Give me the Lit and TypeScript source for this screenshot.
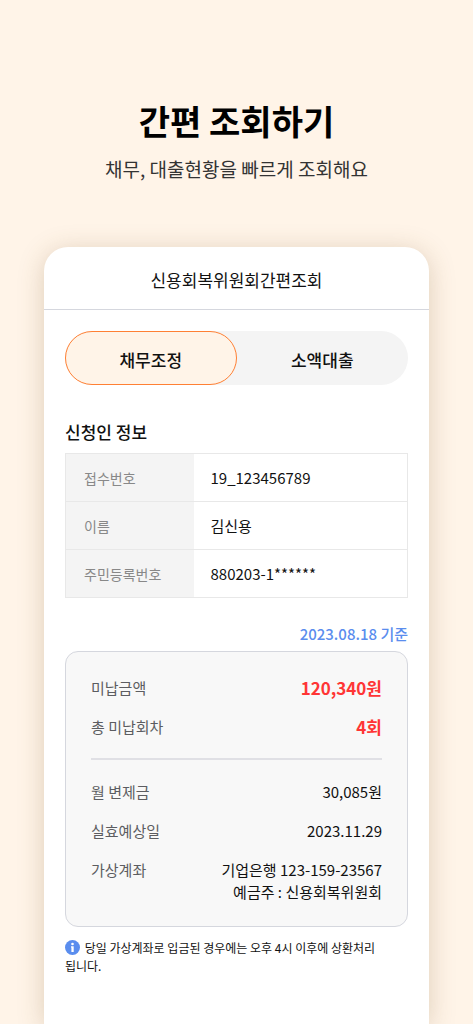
import { LitElement, html, css } from "lit";
import { customElement, state } from "lit/decorators.js";

interface Entry {
  label: string;
  lines: string[];
  alert?: boolean;
}

const TABS = ["채무조정", "소액대출"];

const APPLICANT: [string, string][] = [
  ["접수번호", "19_123456789"],
  ["이름", "김신용"],
  ["주민등록번호", "880203-1******"],
];

const OVERDUE: Entry[] = [
  { label: "미납금액", lines: ["120,340원"], alert: true },
  { label: "총 미납회차", lines: ["4회"], alert: true },
];

const REPAYMENT: Entry[] = [
  { label: "월 변제금", lines: ["30,085원"] },
  { label: "실효예상일", lines: ["2023.11.29"] },
  { label: "가상계좌", lines: ["기업은행 123-159-23567", "예금주 : 신용회복위원회"] },
];

@customElement("app-root")
export class AppRoot extends LitElement {
  @state() private active = 0;

  static styles = css`
    :host {
      display: flex;
      flex-direction: column;
      box-sizing: border-box;
      min-height: 100vh;
      padding: 0 44px;
      overflow: hidden;
      background: #fff4e8;
      color: #111;
      font-family: "Noto Sans CJK KR", "Noto Sans", sans-serif;
      word-break: keep-all;
    }
    * {
      box-sizing: border-box;
    }
    h1,
    h2,
    p,
    dl,
    dd {
      margin: 0;
    }
    .intro {
      padding: 95px 0 64px;
      text-align: center;
      white-space: nowrap;
    }
    .title {
      font-size: 34px;
      line-height: 52px;
      font-weight: 700;
      color: #000;
    }
    .subtitle {
      margin-top: 7px;
      font-size: 19px;
      line-height: 29px;
      color: #333;
    }
    .card {
      flex: 1;
      border-radius: 24px 24px 0 0;
      background: #fff;
      box-shadow: 0 4px 26px rgba(125, 90, 45, 0.25);
    }
    .bar {
      padding: 20px 0 16px;
      border-bottom: 1px solid #d5d7de;
      text-align: center;
      font-size: 17px;
      line-height: 26px;
      font-weight: 400;
    }
    .body {
      padding: 21px 21px 48px;
    }
    .tabs {
      display: grid;
      grid-template-columns: 1fr 1fr;
      border-radius: 27px;
      background: #f4f4f4;
    }
    .tab {
      height: 54px;
      padding: 3px 0 0;
      border: 1px solid transparent;
      border-radius: 27px;
      background: none;
      color: #111;
      font: 500 17px/26px "Noto Sans CJK KR", sans-serif;
      cursor: pointer;
    }
    .tab.on {
      border-color: #ff8034;
      background: #fff4e8;
    }
    .heading {
      margin-top: 34px;
      font-size: 17px;
      line-height: 26px;
      font-weight: 500;
    }
    .info {
      width: 100%;
      margin-top: 8px;
      border-collapse: collapse;
      border: 1px solid #e8e8e8;
      font-size: 15px;
      line-height: 24px;
    }
    .info tr {
      height: 48px;
      border-bottom: 1px solid #e8e8e8;
    }
    .info th {
      width: 128px;
      padding: 0 0 0 18px;
      background: #f4f4f4;
      color: #888;
      font-size: 14px;
      font-weight: 400;
      text-align: left;
    }
    .info td {
      padding: 0 0 0 17px;
    }
    .date {
      margin-top: 23px;
      text-align: right;
      color: #5a8dee;
      font-size: 15px;
      line-height: 26px;
      font-weight: 500;
    }
    .summary {
      margin-top: 4px;
      padding: 25px 25px 23px;
      border: 1px solid #d5d7de;
      border-radius: 13px;
      background: #f8f8f8;
    }
    .list {
      display: grid;
      gap: 17px;
    }
    .list + .list {
      margin-top: 20px;
      padding-top: 21px;
      border-top: 2px solid #e0e0e5;
    }
    .entry {
      display: flex;
      justify-content: space-between;
      font-size: 15px;
      line-height: 22px;
    }
    .entry dt {
      color: #5c5d61;
    }
    .entry dd {
      text-align: right;
    }
    .entry .line {
      display: block;
    }
    .entry .alert {
      color: #ff3535;
      font-size: 17px;
      font-weight: 700;
    }
    .note {
      margin-top: 12px;
      font-size: 12px;
      line-height: 18px;
    }
    .icon {
      width: 15px;
      height: 15px;
      margin-right: 2px;
      vertical-align: -2px;
    }
  `;

  private renderList(entries: Entry[]) {
    return html`<dl class="list">
      ${entries.map(
        (e) => html`<div class="entry">
          <dt>${e.label}</dt>
          <dd class=${e.alert ? "alert" : ""}>
            ${e.lines.map((line) => html`<span class="line">${line}</span>`)}
          </dd>
        </div>`,
      )}
    </dl>`;
  }

  render() {
    return html`
      <header class="intro">
        <h1 class="title">간편 조회하기</h1>
        <p class="subtitle">채무, 대출현황을 빠르게 조회해요</p>
      </header>
      <main class="card">
        <h2 class="bar">신용회복위원회간편조회</h2>
        <div class="body">
          <div class="tabs" role="tablist">
            ${TABS.map(
              (name, i) => html`<button
                class=${i === this.active ? "tab on" : "tab"}
                role="tab"
                aria-selected=${i === this.active ? "true" : "false"}
                @click=${() => (this.active = i)}
              >${name}</button>`,
            )}
          </div>
          <h2 class="heading" id="applicant">신청인 정보</h2>
          <table class="info" aria-labelledby="applicant">
            <tbody>
              ${APPLICANT.map(
                ([label, value]) => html`<tr><th scope="row">${label}</th><td>${value}</td></tr>`,
              )}
            </tbody>
          </table>
          <p class="date">2023.08.18 기준</p>
          <section class="summary">${this.renderList(OVERDUE)}${this.renderList(REPAYMENT)}</section>
          <p class="note">
            <svg class="icon" viewBox="0 0 15 15" aria-hidden="true">
              <circle cx="7.5" cy="7.5" r="7.5" fill="#5a8dee" />
              <circle cx="7.5" cy="4" r="1.3" fill="#fff" />
              <path d="M6 6.2h2.7v5.7H6.4V7.5H6z" fill="#fff" />
            </svg>
            당일 가상계좌로 입금된 경우에는 오후 4시 이후에 상환처리<br />됩니다.
          </p>
        </div>
      </main>
    `;
  }
}
